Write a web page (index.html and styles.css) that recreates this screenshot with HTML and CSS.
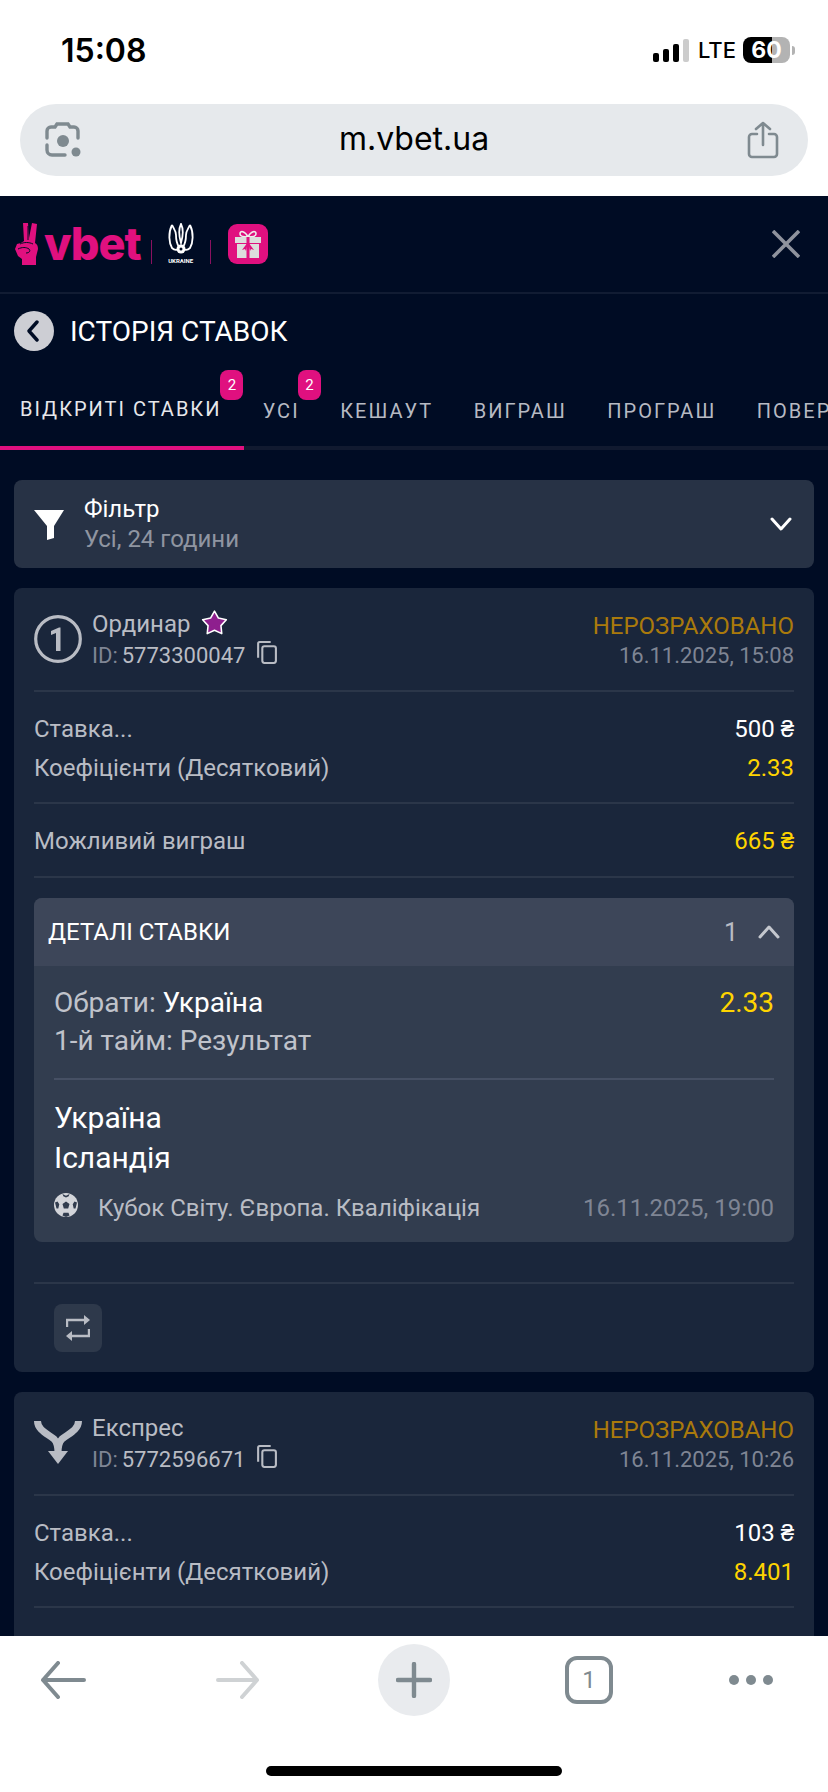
FILE: index.html
```html
<!DOCTYPE html>
<html lang="uk">
<head>
  <meta charset="UTF-8" />
  <meta name="viewport" content="width=device-width, initial-scale=1.0" />
  <title>m.vbet.ua</title>
  <link rel="stylesheet" href="styles.css">
</head>
<body>
  <div class="browser-top">
    <div class="statusbar">
      <span class="time">15:08</span>
      <div class="status-right">
        <div class="signal"><i class="s1"></i><i class="s2"></i><i class="s3"></i><i class="s4"></i></div>
        <span class="lte">LTE</span>
        <div class="battery">60</div>
        <i class="battery-nub"></i>
      </div>
    </div>
    <div class="urlbar">
      <svg class="lens" viewBox="0 0 36 36" fill="none" stroke="#7f8a90" stroke-width="3.4" stroke-linecap="round">
        <path d="M2 16V9a4 4 0 0 1 4-4h4l2-3h11l2 3h4a4 4 0 0 1 4 4v7"/>
        <path d="M2 23v5a5 5 0 0 0 5 5h13"/>
        <circle cx="18" cy="19" r="6" fill="#7f8a90" stroke="none"/>
        <circle cx="31" cy="30" r="4.5" fill="#7f8a90" stroke="none"/>
      </svg>
      <span class="url">m.vbet.ua</span>
      <svg class="share" viewBox="0 0 32 38" fill="none" stroke="#7f8a90" stroke-width="2.6" stroke-linecap="round" stroke-linejoin="round">
        <path d="M10 13H5a3 3 0 0 0-3 3v17a3 3 0 0 0 3 3h22a3 3 0 0 0 3-3V16a3 3 0 0 0-3-3h-5"/>
        <path d="M16 24V2M9 8l7-6 7 6"/>
      </svg>
    </div>
  </div>

  <div class="app">
    <header class="topbar">
      <div class="logo">
        <svg class="hand" viewBox="0 0 26 42">
          <path fill="#e0107f" d="M8 0l5 0 1 15 3-15 5 1-2 19c2 1 3 3 3 6l-2 8 0 8H7l0-6-4-3-3-7 2-5 4-1 3-2z"/>
          <path fill="none" stroke="#000c24" stroke-width="1" d="M5 21c4-2 9-2 13 0M3 26c4-2 8-2 11 0 2 2 0 4-3 4M13 3l0 14"/>
        </svg>
        <span class="vbet">vbet</span>
        <i class="logo-sep"></i>
        <div class="federation">
          <svg class="trident" viewBox="0 0 26 33" fill="none" stroke="#fff" stroke-width="1.8">
            <path d="M13 1c-2 4-3 9 0 19 3-10 2-15 0-19z"/>
            <path d="M4 2C0 10 1 20 4 25c2 2 5 2 7 1"/>
            <path d="M22 2c4 8 3 18 0 23-2 2-5 2-7 1"/>
            <path d="M4 2c2 4 4 6 4 10 0 5 1 9 3 12M22 2c-2 4-4 6-4 10 0 5-1 9-3 12"/>
            <circle cx="13" cy="26" r="4.5" fill="#fff" stroke="none"/>
            <circle cx="13" cy="26" r="1.5" fill="#000c24" stroke="none"/>
          </svg>
          <span class="fed-name">UKRAINE</span>
        </div>
        <i class="logo-sep"></i>
        <div class="gift">
          <svg viewBox="0 0 40 40" width="40" height="40">
            <path fill="none" stroke="#eee" stroke-width="1.6" d="M20 13c-3-6-8-7-8-3 0 3 5 3 8 3 3 0 8 0 8-3 0-4-5-3-8 3z"/>
            <rect x="7" y="13" width="26" height="6" fill="#ddd"/>
            <rect x="9" y="20" width="22" height="14" fill="#ddd"/>
            <rect x="18.5" y="13" width="3" height="21" fill="#e0107f"/>
            <path fill="#e0107f" d="M20 18l-6 8 3-1 1 2zM20 18l6 8-3-1-1 2z"/>
          </svg>
        </div>
      </div>
      <svg class="close" viewBox="0 0 28 28" stroke="#8f939d" stroke-width="3.6"><path d="M1 1l26 26M27 1L1 27"/></svg>
    </header>

    <div class="title-row">
      <div class="back">
        <svg viewBox="0 0 14 22" fill="none" stroke="#000c24" stroke-width="3.4" stroke-linecap="round" stroke-linejoin="round"><path d="M11 2L3 11l8 9"/></svg>
      </div>
      <h1>ІСТОРІЯ СТАВОК</h1>
    </div>

    <nav class="tabs">
      <a class="tab active">ВІДКРИТІ СТАВКИ<b class="badge">2</b></a>
      <a class="tab">УСІ<b class="badge">2</b></a>
      <a class="tab">КЕШАУТ</a>
      <a class="tab">ВИГРАШ</a>
      <a class="tab">ПРОГРАШ</a>
      <a class="tab">ПОВЕРНЕНО</a>
    </nav>

    <div class="content">
      <div class="filter">
        <svg class="funnel" viewBox="0 0 30 30"><path fill="#fff" d="M0 0h30l-10 16v12l-7 2V16z"/></svg>
        <div class="filter-text">
          <div class="filter-title">Фільтр</div>
          <div class="filter-value">Усі, 24 години</div>
        </div>
        <svg class="chevron" viewBox="0 0 22 14" fill="none" stroke="#fff" stroke-width="3" stroke-linecap="round" stroke-linejoin="round"><path d="M2 2l9 10 9-10"/></svg>
      </div>

      <section class="card">
        <div class="card-head">
          <div class="type-icon">
            <svg viewBox="0 0 48 48" width="48" height="48">
              <circle cx="24" cy="24" r="22.3" fill="none" stroke="#b9bcc4" stroke-width="3.2"/>
              <path fill="#b9bcc4" d="M26.500 36h-4.500V18l-5 2v-4l8-3.500h1.500z"/>
            </svg>
          </div>
          <div class="head-left">
            <div class="bet-type">Ординар
              <svg class="star" viewBox="0 0 26 24"><path fill="#8e1f8e" stroke="#fff" stroke-width="1.500" stroke-linejoin="round" d="M13 1l3.800 6.700 7.600 1.600-5.200 5.700.8 7.700-7-3.200-7 3.200.8-7.700-5.200-5.700 7.600-1.600z"/></svg>
            </div>
            <div class="bet-id"><span>ID:</span> 5773300047
              <svg class="copy" viewBox="0 0 20 22" fill="none" stroke="#b9bcc4" stroke-width="2"><path d="M2 16V2.500a1.500 1.500 0 0 1 1.500-1.500H14"/><rect x="6" y="5" width="13" height="16" rx="2"/></svg>
            </div>
          </div>
          <div class="head-right">
            <div class="state">НЕРОЗРАХОВАНО</div>
            <div class="date">16.11.2025, 15:08</div>
          </div>
        </div>
        <div class="rows">
          <div class="row"><span>Ставка...</span><span class="val">500 ₴</span></div>
          <div class="row"><span>Коефіцієнти (Десятковий)</span><span class="val gold">2.33</span></div>
        </div>
        <div class="row-single"><span>Можливий виграш</span><span class="val gold">665 ₴</span></div>

        <div class="details">
          <div class="details-head">
            <span>ДЕТАЛІ СТАВКИ</span>
            <div class="details-count">1
              <svg class="chevron-up" viewBox="0 0 22 14" fill="none" stroke="#c4c7ce" stroke-width="3" stroke-linecap="round" stroke-linejoin="round"><path d="M2 12l9-10 9 10"/></svg>
            </div>
          </div>
          <div class="details-body">
            <div class="pick">
              <div>
                <div class="pick-line">Обрати: <span class="white">Україна</span></div>
                <div class="pick-line">1-й тайм: Результат</div>
              </div>
              <span class="pick-odd">2.33</span>
            </div>
            <div class="teams">
              <div>Україна</div>
              <div>Ісландія</div>
            </div>
            <div class="league">
              <svg class="ball" viewBox="0 0 24 24">
                <circle cx="12" cy="12" r="12" fill="#d3d5da"/>
                <path fill="#323d4f" d="M12 8.500l3.500 2.500-1.300 4.500H9.800L8.500 11zM8.500 1l3.500 1.700L15.500 1l-.8 2.300-2.700 1.300-2.700-1.300zM1 9.500l2.500-1 1.800 2.700-1 4.200-1.800 0zM23 9.500l-2.500-1-1.800 2.700 1 4.200 1.800 0zM8.500 22.500l1-2.800h5l1 2.800-3.500 1.500z"/>
              </svg>
              <span class="league-name">Кубок Світу. Європа. Кваліфікація</span>
              <span class="league-date">16.11.2025, 19:00</span>
            </div>
          </div>
        </div>

        <div class="card-foot">
          <div class="repeat">
            <svg viewBox="0 0 24 26" width="24" height="26" fill="none" stroke="#b9bcc4" stroke-width="2.400">
              <path d="M1 12V5h18"/><path fill="#b9bcc4" stroke="none" d="M18 0l6 5-6 5z"/>
              <path d="M23 14v7H5"/><path fill="#b9bcc4" stroke="none" d="M6 16l-6 5 6 5z"/>
            </svg>
          </div>
        </div>
      </section>

      <section class="card">
        <div class="card-head">
          <div class="type-icon express">
            <svg viewBox="0 0 48 44" width="48" height="44">
              <path fill="none" stroke="#b9bcc4" stroke-width="7" d="M3.500 0C3.500 9 14 13 20 18c3 3 4 6 4 14M44.500 0C44.500 9 34 13 28 18c-3 3-4 6-4 14"/>
              <path fill="#b9bcc4" d="M14 30h20L24 43z"/>
            </svg>
          </div>
          <div class="head-left">
            <div class="bet-type">Експрес</div>
            <div class="bet-id"><span>ID:</span> 5772596671
              <svg class="copy" viewBox="0 0 20 22" fill="none" stroke="#b9bcc4" stroke-width="2"><path d="M2 16V2.500a1.500 1.500 0 0 1 1.500-1.500H14"/><rect x="6" y="5" width="13" height="16" rx="2"/></svg>
            </div>
          </div>
          <div class="head-right">
            <div class="state">НЕРОЗРАХОВАНО</div>
            <div class="date">16.11.2025, 10:26</div>
          </div>
        </div>
        <div class="rows">
          <div class="row"><span>Ставка...</span><span class="val">103 ₴</span></div>
          <div class="row"><span>Коефіцієнти (Десятковий)</span><span class="val gold">8.401</span></div>
        </div>
        <div class="row-single"><span>Можливий виграш</span><span class="val gold">66.07 ₴</span></div>
      </section>
    </div>
  </div>

  <div class="toolbar">
    <div class="tool-row">
      <div class="tool">
        <svg viewBox="0 0 46 38" width="46" height="38" fill="none" stroke="#7f8a90" stroke-width="4" stroke-linecap="round" stroke-linejoin="round"><path d="M44 19H3M18 2L3 19l15 17"/></svg>
      </div>
      <div class="tool">
        <svg viewBox="0 0 44 38" width="44" height="38" fill="none" stroke="#cfd2d4" stroke-width="4" stroke-linecap="round" stroke-linejoin="round"><path d="M2 19h39M26 2l15 17-15 17"/></svg>
      </div>
      <div class="tool plus">
        <svg viewBox="0 0 36 36" width="36" height="36" stroke="#7f8a90" stroke-width="4.400" stroke-linecap="round"><path d="M18 2v32M2 18h32"/></svg>
      </div>
      <div class="tool">
        <div class="tab-count">1</div>
      </div>
      <div class="tool dots"><i></i><i></i><i></i></div>
    </div>
    <div class="home-bar"></div>
  </div>
</body>
</html>
```

FILE: styles.css
```css
* {
  box-sizing: border-box;
}
body {
  margin: 0;
  width: 828px;
  height: 1792px;
  display: flex;
  flex-direction: column;
  overflow: hidden;
  background: #fff;
  font-family: Roboto, Arial, sans-serif;
}

/* browser chrome */
.browser-top {
  height: 196px;
  flex: none;
  background: #fff;
}
.statusbar {
  height: 104px;
  padding: 0 33px 4px 61px;
  display: flex;
  align-items: center;
  justify-content: space-between;
}
.time {
  font-family: Inter, sans-serif;
  font-size: 32px;
  font-weight: 600;
  color: #000;
}
.status-right {
  display: flex;
  align-items: center;
}
.signal {
  display: flex;
  align-items: flex-end;
  gap: 4px;
  height: 23px;
  margin-right: 9px;
}
.signal i {
  width: 6px;
  background: #000;
  border-radius: 2px;
}
.s1 { height: 9px; }
.s2 { height: 13px; }
.s3 { height: 18px; }
.signal .s4 { height: 23px; background: #ccc; }
.lte {
  font-family: Inter, sans-serif;
  font-size: 22px;
  font-weight: 500;
  color: #000;
  margin-right: 7px;
}
.battery {
  width: 47px;
  height: 26px;
  border-radius: 8px;
  background: linear-gradient(90deg, #000 62%, #b3b3b3 62%);
  color: #fff;
  font-family: Inter, sans-serif;
  font-size: 23px;
  font-weight: 700;
  text-align: center;
  line-height: 26px;
}
.battery-nub {
  width: 3px;
  height: 9px;
  margin-left: 2px;
  background: #b3b3b3;
  border-radius: 0 3px 3px 0;
}
.urlbar {
  margin: 0 20px;
  height: 72px;
  padding: 0 29px 0 25px;
  border-radius: 36px;
  background: #e6e9ec;
  display: flex;
  align-items: center;
  justify-content: space-between;
}
.lens {
  width: 36px;
  height: 36px;
}
.url {
  padding-bottom: 4px;
  font-family: Inter, sans-serif;
  font-size: 32px;
  color: #000;
}
.share {
  width: 32px;
  height: 38px;
}

/* app */
.app {
  flex: 1;
  min-height: 0;
  overflow: hidden;
  background: #000c24;
  color: #fff;
}
.topbar {
  height: 98px;
  padding: 0 28px 0 15px;
  border-bottom: 2px solid #111c33;
  display: flex;
  align-items: center;
  justify-content: space-between;
}
.logo {
  display: flex;
  align-items: center;
}
.hand {
  width: 26px;
  height: 42px;
}
.vbet {
  font-family: Inter, sans-serif;
  font-size: 45px;
  font-weight: 800;
  letter-spacing: -1px;
  line-height: 42px;
  color: #e0107f;
  margin: 0 10px 0 3px;
}
.logo-sep {
  width: 1px;
  height: 24px;
  margin-top: 16px;
  background: #8a1160;
}
.federation {
  width: 26px;
  margin: 0 16px;
  display: flex;
  flex-direction: column;
  align-items: center;
}
.trident {
  width: 26px;
  height: 33px;
}
.fed-name {
  font-size: 6px;
  font-weight: 700;
  line-height: 9px;
  white-space: nowrap;
}
.gift {
  width: 40px;
  height: 40px;
  margin-left: 17px;
  border-radius: 9px;
  background: #e0107f;
}
.close {
  width: 28px;
  height: 28px;
}
.title-row {
  height: 74px;
  padding-left: 14px;
  display: flex;
  align-items: center;
}
.back {
  width: 40px;
  height: 40px;
  border-radius: 50%;
  background: #cdced4;
  display: flex;
  align-items: center;
  justify-content: center;
  padding-right: 3px;
}
.back svg {
  width: 14px;
  height: 22px;
}
h1 {
  margin: 0 0 0 16px;
  font-size: 28px;
  font-weight: 400;
}
.tabs {
  height: 82px;
  display: flex;
  align-items: stretch;
  border-bottom: 4px solid #111a30;
  white-space: nowrap;
}
.tab {
  position: relative;
  height: 82px;
  padding: 4px 20.3px 0;
  display: flex;
  align-items: center;
  font-size: 20px;
  letter-spacing: 2px;
  color: #b7bac3;
}
.tab.active {
  color: #e6e7eb;
  border-bottom: 4px solid #e0107f;
  padding-left: 20px;
  padding-right: 23px;
  margin-right: -2px;
}
.badge {
  position: absolute;
  top: 2px;
  right: -1px;
  width: 23px;
  height: 30px;
  border-radius: 8px;
  background: #e0107f;
  color: #fff;
  font-size: 15px;
  font-weight: 400;
  letter-spacing: 0;
  line-height: 30px;
  text-align: center;
}
.tab.active .badge {
  right: 1px;
}
.content {
  padding: 30px 14px 0;
}
.filter {
  height: 88px;
  padding: 0 22px 0 20px;
  margin-bottom: 20px;
  border-radius: 8px;
  background: #273245;
  display: flex;
  align-items: center;
}
.funnel {
  width: 30px;
  height: 30px;
  margin: 2px 20px 0 0;
}
.filter-text {
  flex: 1;
}
.filter-title {
  font-size: 24px;
  line-height: 30px;
}
.filter-value {
  font-size: 24px;
  line-height: 30px;
  color: #8f95a1;
}
.chevron {
  width: 22px;
  height: 14px;
}

/* bet card */
.card {
  padding: 0 20px 20px;
  margin-bottom: 20px;
  border-radius: 8px;
  background: #1a263b;
}
.card-head {
  height: 104px;
  padding-bottom: 2px;
  border-bottom: 2px solid #2b3649;
  display: flex;
  align-items: flex-start;
}
.type-icon {
  width: 48px;
  margin-top: 27px;
}
.type-icon.express {
  margin-top: 29px;
}
.type-icon svg {
  display: block;
}
.head-left {
  flex: 1;
  margin: 21px 0 0 10px;
  font-size: 24px;
  line-height: 31px;
}
.bet-type {
  color: #b9bcc4;
  display: flex;
  align-items: center;
  gap: 11px;
}
.star {
  width: 27px;
  height: 25px;
  margin-bottom: 4px;
}
.bet-id {
  color: #b9bcc4;
  font-size: 22px;
  display: flex;
  align-items: center;
  gap: 4px;
}
.bet-id span {
  color: #7f8594;
}
.copy {
  width: 21px;
  height: 23px;
  margin: 0 0 6px 7px;
}
.head-right {
  margin-top: 24px;
  text-align: right;
  line-height: 29px;
}
.state {
  font-size: 24px;
  color: #aa7a0c;
}
.date {
  font-size: 22px;
  color: #7f8594;
}
.rows {
  padding: 17px 0 15px;
  border-bottom: 2px solid #2b3649;
}
.row, .row-single {
  display: flex;
  align-items: center;
  justify-content: space-between;
  font-size: 24px;
  color: #b9bcc4;
}
.row {
  height: 39px;
}
.row-single {
  height: 74px;
  padding-top: 2px;
  border-bottom: 2px solid #2b3649;
}
.val {
  color: #fff;
}
.val.gold {
  color: #ffd400;
}

/* bet details */
.details {
  margin-top: 20px;
  border-radius: 8px;
  overflow: hidden;
  background: #323d4f;
}
.details-head {
  height: 68px;
  padding: 0 14px;
  display: flex;
  align-items: center;
  justify-content: space-between;
  background: #3d4659;
  font-size: 24px;
}
.details-count {
  display: flex;
  align-items: center;
  gap: 20px;
  color: #b9bcc4;
  font-size: 25px;
}
.chevron-up {
  width: 22px;
  height: 14px;
}
.details-body {
  padding: 18px 20px 14px;
}
.pick {
  display: flex;
  justify-content: space-between;
  padding-bottom: 18px;
  border-bottom: 2px solid #465064;
}
.pick-line {
  font-size: 28px;
  line-height: 38px;
  color: #c0c3cb;
}
.white {
  color: #fff;
}
.pick-odd {
  font-size: 28px;
  line-height: 38px;
  color: #ffd400;
}
.teams {
  padding-top: 18px;
  font-size: 30px;
  line-height: 40px;
}
.league {
  height: 40px;
  margin-top: 10px;
  display: flex;
  align-items: center;
  font-size: 24px;
  color: #b9bcc4;
}
.ball {
  width: 24px;
  height: 24px;
  margin: 0 20px 6px 0;
}
.league-name {
  flex: 1;
}
.league-date {
  color: #7f8594;
}
.card-foot {
  margin-top: 40px;
  padding: 20px 20px 0;
  border-top: 2px solid #2b3649;
}
.repeat {
  width: 48px;
  height: 48px;
  border-radius: 8px;
  background: #2e394b;
  display: flex;
  align-items: center;
  justify-content: center;
}

/* bottom toolbar */
.toolbar {
  height: 156px;
  flex: none;
  padding-top: 8px;
  background: #fff;
}
.tool-row {
  display: flex;
  padding-left: 27px;
  gap: 103px;
}
.tool {
  width: 72px;
  height: 72px;
  display: flex;
  align-items: center;
  justify-content: center;
}
.plus {
  margin-left: 1px;
  border-radius: 50%;
  background: #e9ebee;
}
.tab-count {
  width: 48px;
  height: 48px;
  border: 4px solid #7f8a90;
  border-radius: 12px;
  color: #7f8a90;
  font-size: 24px;
  text-align: center;
  line-height: 40px;
}
.dots {
  gap: 7px;
  margin-left: -13px;
}
.dots i {
  width: 10px;
  height: 10px;
  border-radius: 50%;
  background: #7f8a90;
}
.home-bar {
  width: 296px;
  height: 10px;
  margin: 50px auto 0;
  border-radius: 5px;
  background: #000;
}
```
